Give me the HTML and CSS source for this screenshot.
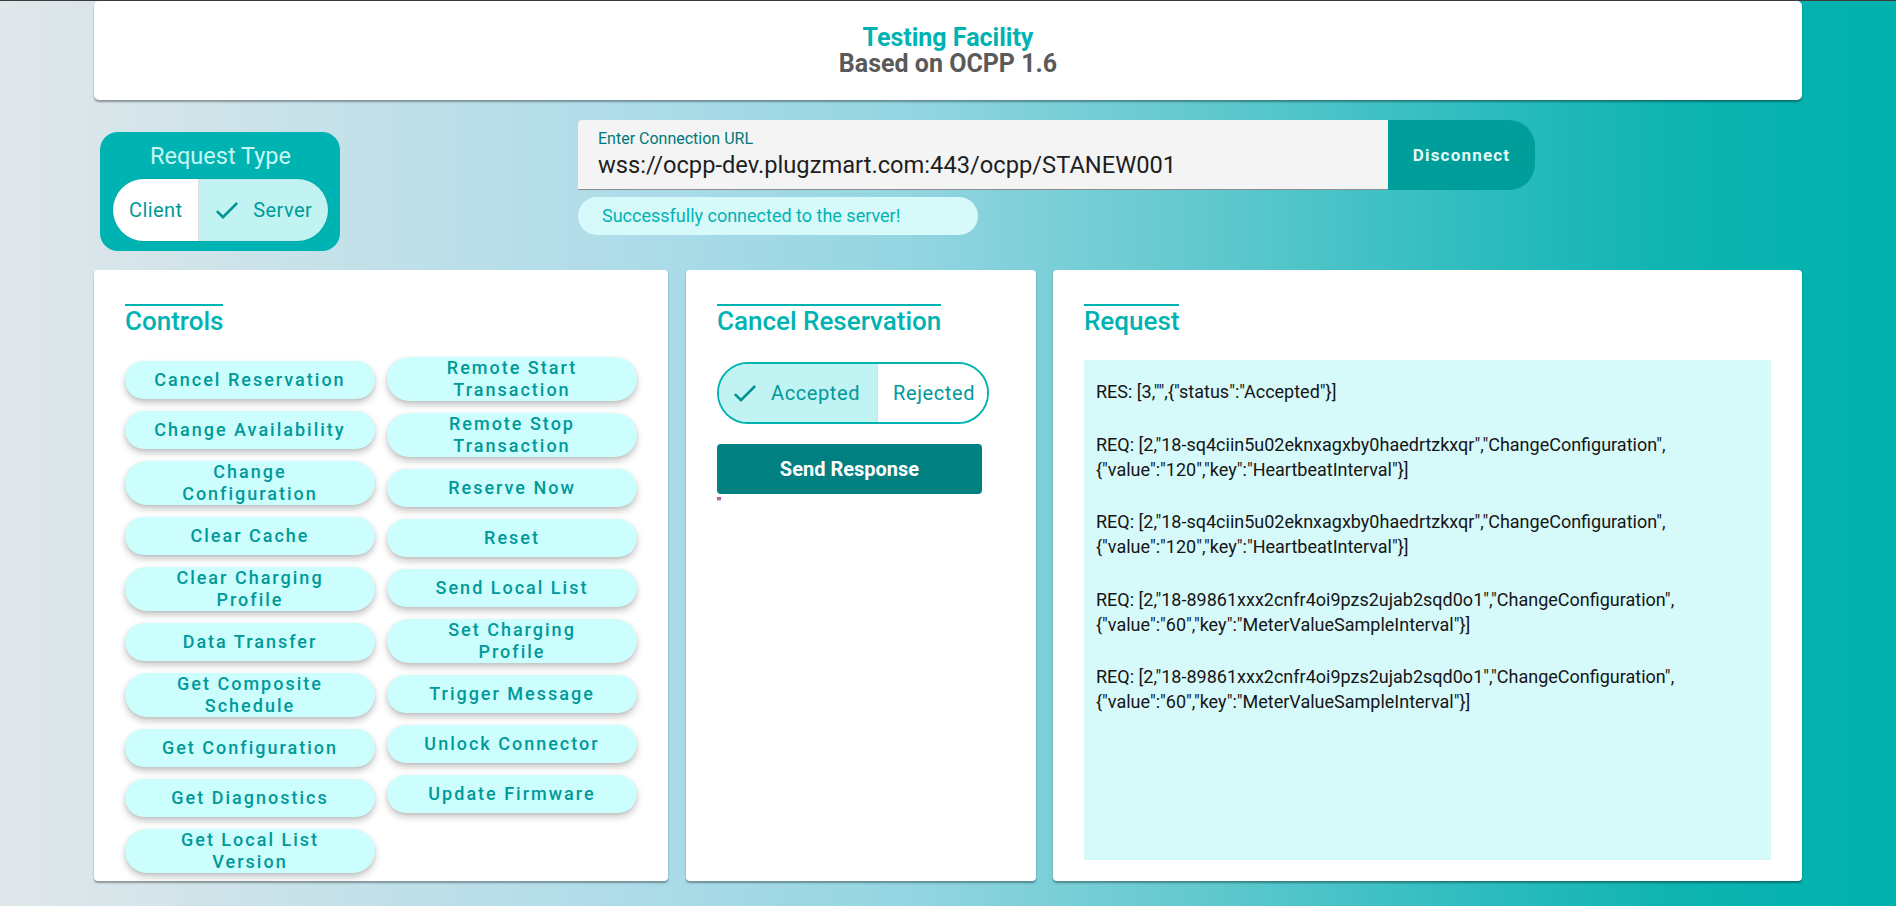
FILE: index.html
```html
<!DOCTYPE html>
<html lang="en">
<head>
<meta charset="utf-8">
<title>Testing Facility</title>
<link rel="stylesheet" href="styles.css">
</head>
<body>
<div class="page">
  <header class="hero">
    <div class="hero-title">Testing Facility</div>
    <div class="hero-sub">Based on OCPP 1.6</div>
  </header>

  <section class="topbar">
    <div class="reqtype">
      <div class="reqtype-title">Request Type</div>
      <div class="seg">
        <span class="seg-btn">Client</span>
        <span class="seg-btn on"><svg class="check" viewBox="3.41 5.59 17.59 13.41"><path d="M9 16.17 4.83 12l-1.42 1.41L9 19 21 7l-1.41-1.41z"/></svg>Server</span>
      </div>
    </div>
    <div class="conn">
      <div class="conn-row">
        <div class="url-field">
          <div class="url-label">Enter Connection URL</div>
          <div class="url-value">wss://ocpp-dev.plugzmart.com:443/ocpp/STANEW001</div>
        </div>
        <button class="disconnect">Disconnect</button>
      </div>
      <div class="status">Successfully connected to the server!</div>
    </div>
  </section>

  <section class="cards">
    <div class="card controls">
      <h2 class="card-title">Controls</h2>
      <div class="btn-grid">
        <div class="col left">
          <button class="ctl">Cancel Reservation</button>
          <button class="ctl">Change Availability</button>
          <button class="ctl">Change Configuration</button>
          <button class="ctl">Clear Cache</button>
          <button class="ctl">Clear Charging Profile</button>
          <button class="ctl">Data Transfer</button>
          <button class="ctl">Get Composite Schedule</button>
          <button class="ctl">Get Configuration</button>
          <button class="ctl">Get Diagnostics</button>
          <button class="ctl">Get Local List Version</button>
        </div>
        <div class="col">
          <button class="ctl">Remote Start Transaction</button>
          <button class="ctl">Remote Stop Transaction</button>
          <button class="ctl">Reserve Now</button>
          <button class="ctl">Reset</button>
          <button class="ctl">Send Local List</button>
          <button class="ctl">Set Charging Profile</button>
          <button class="ctl">Trigger Message</button>
          <button class="ctl">Unlock Connector</button>
          <button class="ctl">Update Firmware</button>
        </div>
      </div>
    </div>

    <div class="card action">
      <h2 class="card-title">Cancel Reservation</h2>
      <div class="seg outline">
        <span class="seg-btn on"><svg class="check" viewBox="3.41 5.59 17.59 13.41"><path d="M9 16.17 4.83 12l-1.42 1.41L9 19 21 7l-1.41-1.41z"/></svg>Accepted</span>
        <span class="seg-btn">Rejected</span>
      </div>
      <button class="send">Send Response</button>
      <div class="err">"</div>
    </div>

    <div class="card request">
      <h2 class="card-title">Request</h2>
      <div class="log">
        <div class="entry">RES: [3,"",{"status":"Accepted"}]</div>
        <div class="entry">REQ: [2,"18-sq4ciin5u02eknxagxby0haedrtzkxqr","ChangeConfiguration", {"value":"120","key":"HeartbeatInterval"}]</div>
        <div class="entry">REQ: [2,"18-sq4ciin5u02eknxagxby0haedrtzkxqr","ChangeConfiguration", {"value":"120","key":"HeartbeatInterval"}]</div>
        <div class="entry">REQ: [2,"18-89861xxx2cnfr4oi9pzs2ujab2sqd0o1","ChangeConfiguration", {"value":"60","key":"MeterValueSampleInterval"}]</div>
        <div class="entry">REQ: [2,"18-89861xxx2cnfr4oi9pzs2ujab2sqd0o1","ChangeConfiguration", {"value":"60","key":"MeterValueSampleInterval"}]</div>
      </div>
    </div>
  </section>
</div>
</body>
</html>
```

FILE: styles.css
```css
* { box-sizing: border-box; }

html, body { height: 100%; }

body {
  margin: 0;
  border-top: 1px solid #3b3b3b;
  font-family: Roboto, "Liberation Sans", Arial, sans-serif;
  background: linear-gradient(90deg, #e1e7ea 0%, #c4e1e9 18%, #abdbe8 35%, #93d5e1 48%, #66cad0 62%, #34bec1 76%, #0fb4b1 88%, #00b1ad 100%);
  overflow: hidden;
}

.page {
  width: 1708px;
  margin: 0 auto;
}

/* header */
.hero {
  height: 99px;
  background: #fff;
  border-radius: 5px;
  box-shadow: 0 2px 2px rgba(0, 0, 0, 0.35);
  display: flex;
  flex-direction: column;
  align-items: center;
  justify-content: center;
  font-weight: 700;
  font-size: 25px;
  line-height: 26px;
}
.hero-title { color: #00b3b3; }
.hero-sub { color: #5a5a5a; }

/* top bar */
.topbar {
  display: flex;
  align-items: flex-start;
  margin-top: 20px;
}

.reqtype {
  margin-left: 6px;
  margin-top: 12px;
  width: 240px;
  height: 119px;
  background: #00b3b3;
  border-radius: 18px;
  padding: 11px 12px 10px 13px;
}
.reqtype-title {
  font-size: 23.5px;
  line-height: 26px;
  color: #c6f6f3;
  text-align: center;
  margin-bottom: 10px;
}

.seg {
  display: flex;
  height: 62px;
  border-radius: 31px;
  overflow: hidden;
  width: 215px;
  box-shadow: 0 0 0 1px rgba(0, 0, 0, 0.06);
}
.seg-btn {
  display: flex;
  align-items: center;
  gap: 15px;
  padding: 0 16px;
  font-size: 20px;
  letter-spacing: 0.4px;
  color: #00999a;
  background: #fff;
}
.seg-btn + .seg-btn { border-left: 1px solid #dcdcdc; }
.seg-btn.on { background: #c0f3f2; padding: 0 17px; }

.check {
  width: 22px;
  height: 17px;
  fill: #009494;
  flex: none;
}

.conn { margin-left: 238px; }
.conn-row { display: flex; height: 70px; }

.url-field {
  width: 810px;
  background: #f4f4f4;
  border-bottom: 1px solid #8d8d8d;
  border-radius: 4px 0 0 0;
  padding: 10px 20px 0;
}
.url-label {
  font-size: 16px;
  line-height: 18px;
  color: #00787a;
}
.url-value {
  margin-top: 3px;
  font-size: 23.7px;
  line-height: 28px;
  color: #1e1e1e;
}

.disconnect {
  width: 147px;
  border: 0;
  margin: 0;
  background: #009e9a;
  color: #e2fbfb;
  font-family: inherit;
  font-size: 17px;
  font-weight: 700;
  letter-spacing: 1.2px;
  border-radius: 0 26px 26px 0;
}

.status {
  margin-top: 7px;
  width: 400px;
  height: 38px;
  border-radius: 19px;
  background: #d6fafa;
  color: #00b3b3;
  font-size: 18px;
  line-height: 38px;
  padding-left: 24px;
}

/* cards */
.cards {
  display: flex;
  align-items: stretch;
  margin-top: 19px;
}
.card {
  background: #fff;
  border-radius: 4px;
  box-shadow: 0 2px 2px rgba(0, 0, 0, 0.35);
  padding: 34px 31px 21px;
  display: flex;
  flex-direction: column;
  align-items: flex-start;
}
.card-title {
  margin: 0;
  border-top: 2px solid #00b3b3;
  font-size: 26px;
  font-weight: 500;
  line-height: 30px;
  color: #00b3b3;
}

.controls { width: 574px; padding-bottom: 8px; }
.action { width: 350px; margin-left: 18px; }
.request { flex: 1; margin-left: 17px; align-items: stretch; }
.request .card-title { align-self: flex-start; }

.btn-grid {
  display: flex;
  gap: 12px;
  margin-top: 21px;
}
.col {
  width: 250px;
  display: flex;
  flex-direction: column;
  gap: 12px;
}
.col.left { margin-top: 4px; }

.ctl {
  min-height: 38px;
  padding: 0 28px;
  border: 0;
  border-radius: 22px;
  background: #ccfefe;
  color: #009999;
  font-family: inherit;
  font-size: 18px;
  font-weight: 500;
  letter-spacing: 2px;
  line-height: 22px;
  box-shadow: 0 4px 7px rgba(0, 0, 0, 0.22), 0 1px 3px rgba(0, 0, 0, 0.08);
}

.seg.outline {
  margin-top: 26px;
  width: 272px;
  border: 2px solid #00b3b3;
  box-shadow: none;
}
.seg.outline .seg-btn.on { padding: 0 17px 0 15px; }
.seg.outline .seg-btn { padding: 0 15px 0 15px; font-size: 20px; letter-spacing: 0.6px; }

.send {
  margin-top: 20px;
  width: 265px;
  height: 50px;
  border: 0;
  border-radius: 4px;
  background: #008080;
  color: #fff;
  font-family: inherit;
  font-size: 20px;
  font-weight: 700;
}

.err {
  font-size: 13px;
  line-height: 12px;
  font-weight: 700;
  color: #a01010;
  margin-top: 3px;
}

.log {
  margin-top: 24px;
  flex: 1;
  background: #d6f9fa;
  padding: 20px 12px;
  font-size: 18px;
  line-height: 24.75px;
  color: #151515;
}
.entry { margin-bottom: 28px; }
```
